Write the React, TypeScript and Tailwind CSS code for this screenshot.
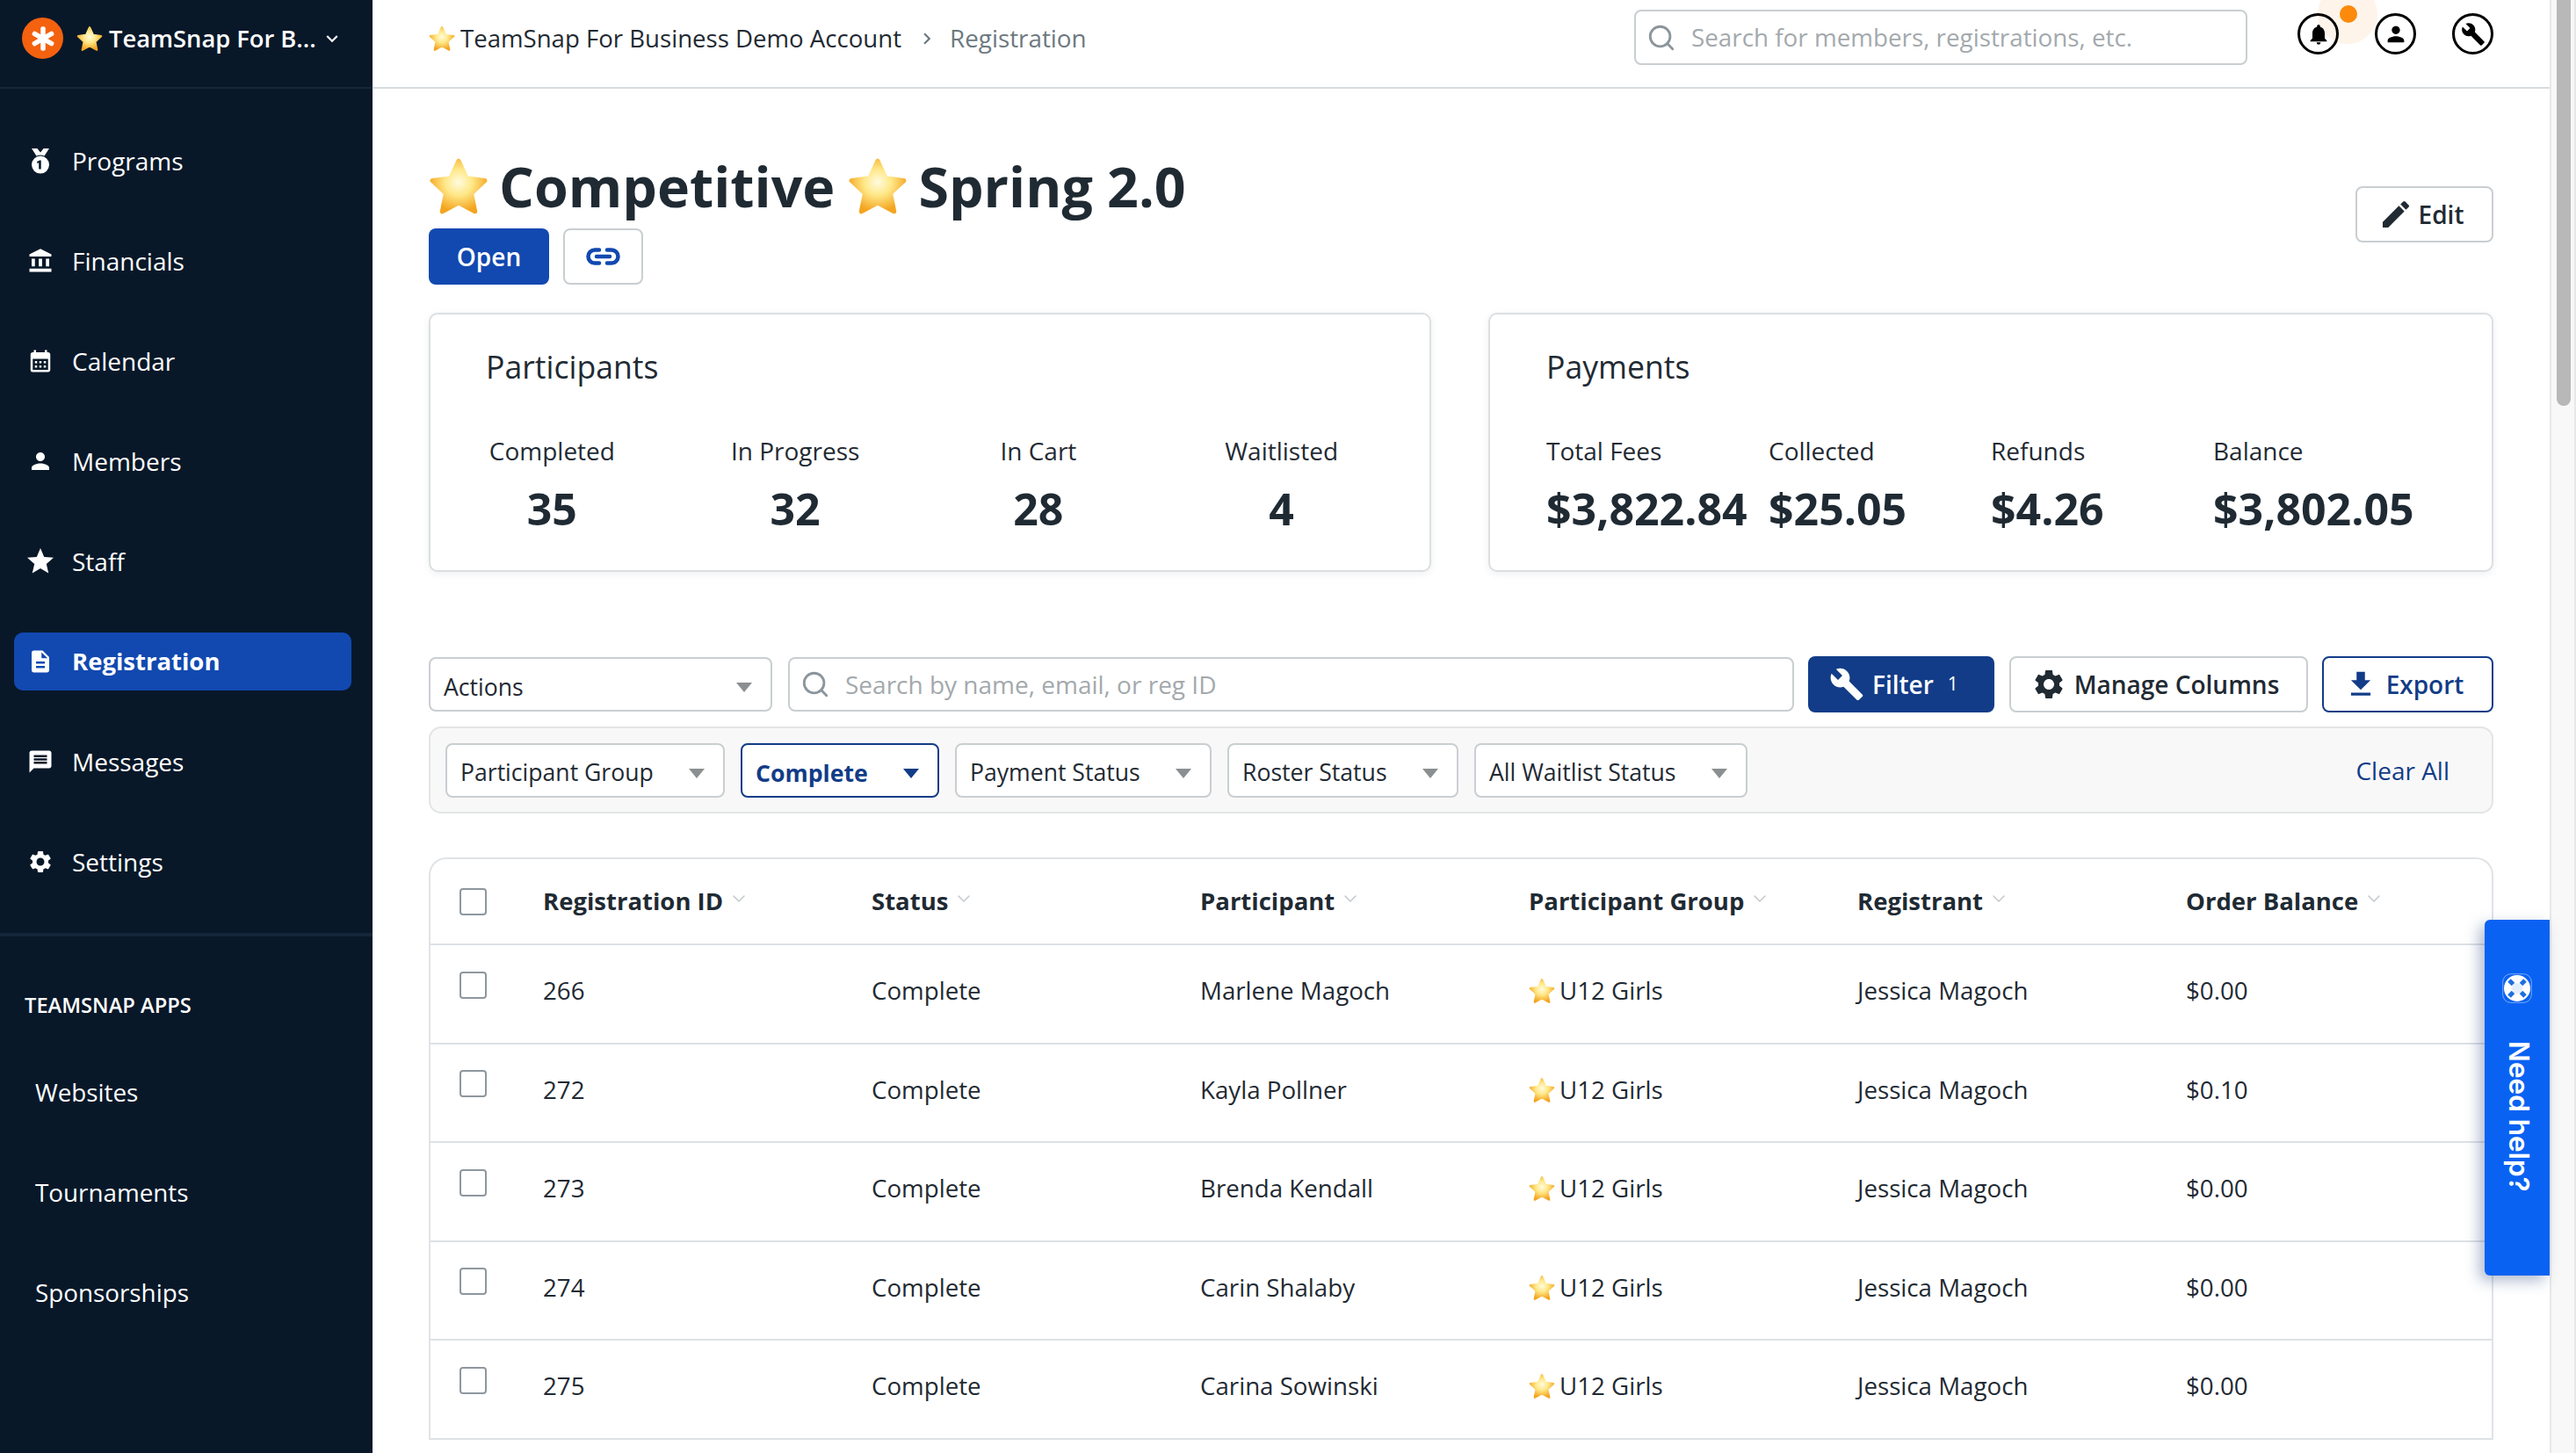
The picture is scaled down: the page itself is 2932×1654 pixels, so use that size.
import React from 'react';
import { MdAccountBalance, MdCalendarMonth, MdPerson, MdStar, MdDescription, MdMessage, MdSettings, MdEdit, MdBuild, MdFileDownload, MdNotifications, MdKeyboardArrowDown, MdChevronRight } from 'react-icons/md';
import { ChevronDown, Search } from 'lucide-react';

function Star({ id, className }: { id: string; className: string }) {
  return (
    <svg viewBox="0 0 64 64" className={className}>
      <defs>
        <radialGradient id={id} cx="50%" cy="42%" r="58%">
          <stop offset="0%" stopColor="#fffbe0" />
          <stop offset="45%" stopColor="#ffe888" />
          <stop offset="100%" stopColor="#f4a520" />
        </radialGradient>
      </defs>
      <path d="M32 5 L40.5 23.5 L60 26 L45.5 39.5 L49.5 59 L32 49.5 L14.5 59 L18.5 39.5 L4 26 L23.5 23.5 Z" fill={`url(#${id})`} stroke={`url(#${id})`} strokeWidth="5" strokeLinejoin="round" />
    </svg>
  );
}

function Medal({ className }: { className: string }) {
  return (
    <svg viewBox="0 0 24 32" className={className} fill="currentColor">
      <path d="M1 0h7l4 5 4-5h7l-6 9.5a11 11 0 0 0-10 0z" />
      <path fillRule="evenodd" d="M12 9.5a11 11 0 1 1 0 22 11 11 0 0 1 0-22zM11 15l-3.2 1.6v2.2l2.2-.9V26h2.8V15z" />
    </svg>
  );
}

function Arrow({ color }: { color: string }) {
  return (
    <svg viewBox="0 0 18 11" className={`w-[18px] h-[11px] shrink-0 mt-[7px] ${color}`} fill="currentColor">
      <path d="M0 0h18L9 11z" />
    </svg>
  );
}

const nav = [
  { label: 'Programs', icon: <Medal className="w-[24px] h-[29px]" /> },
  { label: 'Financials', icon: <MdAccountBalance className="w-[30px] h-[30px]" /> },
  { label: 'Calendar', icon: <MdCalendarMonth className="w-[30px] h-[30px]" /> },
  { label: 'Members', icon: <MdPerson className="w-[30px] h-[30px]" /> },
  { label: 'Staff', icon: <MdStar className="w-[36px] h-[36px]" /> },
  { label: 'Registration', icon: <MdDescription className="w-[30px] h-[30px]" />, active: true },
  { label: 'Messages', icon: <MdMessage className="w-[30px] h-[30px]" /> },
  { label: 'Settings', icon: <MdSettings className="w-[30px] h-[30px]" /> },
];

const rows = [
  ['266', 'Marlene Magoch', '$0.00'],
  ['272', 'Kayla Pollner', '$0.10'],
  ['273', 'Brenda Kendall', '$0.00'],
  ['274', 'Carin Shalaby', '$0.00'],
  ['275', 'Carina Sowinski', '$0.00'],
];

const headers = ['Registration ID', 'Status', 'Participant', 'Participant Group', 'Registrant', 'Order Balance'];

function Sidebar() {
  return (
    <aside className="w-[424px] shrink-0 h-full bg-[#081829] text-white flex flex-col">
      <div className="h-[101px] shrink-0 border-b-[2px] border-[#15263a] flex items-start pt-[20px] pl-[25px]">
        <div className="w-[47px] h-[47px] rounded-full bg-[#f4610f] flex items-center justify-center shrink-0">
          <svg viewBox="0 0 24 24" className="w-[30px] h-[30px]" fill="#fff">
            <rect x="9.8" y="1" width="4.4" height="22" rx="1.6" />
            <rect x="9.8" y="1" width="4.4" height="22" rx="1.6" transform="rotate(60 12 12)" />
            <rect x="9.8" y="1" width="4.4" height="22" rx="1.6" transform="rotate(120 12 12)" />
          </svg>
        </div>
        <div className="flex items-center h-[47px] ml-[15px]">
          <Star id="s-side" className="w-[30px] h-[30px]" />
          <span className="ml-[7px] text-[27.3px] font-semibold leading-none whitespace-nowrap">TeamSnap For B...</span>
          <MdKeyboardArrowDown className="w-[26px] h-[26px] ml-[5px]" />
        </div>
      </div>
      <nav className="flex flex-col px-[16px] pt-[49px] gap-[48px] shrink-0">
        {nav.map((n) => (
          <div key={n.label} className={`h-[66px] flex items-center rounded-[10px] w-[384px] ${n.active ? 'bg-[#1249b0] font-bold' : ''}`}>
            <span className="w-[60px] flex justify-center shrink-0">{n.icon}</span>
            <span className={`ml-[6px] leading-none ${n.active ? 'text-[27.5px]' : 'text-[28px]'}`}>{n.label}</span>
          </div>
        ))}
      </nav>
      <div className="mt-[48px] h-[4px] bg-[#15263a] shrink-0" />
      <div className="pl-[28px] mt-[67px] text-[23.7px] font-semibold leading-none">TEAMSNAP APPS</div>
      <div className="flex flex-col pl-[40px] mt-[71px] gap-[84px] text-[27.8px] leading-[30px]">
        <div>Websites</div>
        <div>Tournaments</div>
        <div>Sponsorships</div>
      </div>
    </aside>
  );
}

function TopBar() {
  return (
    <header className="h-[101px] shrink-0 border-b-[2px] border-[#d6dbde] flex items-start px-[64px] relative">
      <div className="flex items-center h-[88px]">
        <Star id="s-crumb" className="w-[30px] h-[30px]" />
        <span className="ml-[6px] text-[27.6px] text-[#1f2a33] whitespace-nowrap">TeamSnap For Business Demo Account</span>
        <MdChevronRight className="w-[26px] h-[26px] ml-[16px] text-[#6d7880]" />
        <span className="ml-[13px] text-[27.8px] text-[#6d7880]">Registration</span>
      </div>
      <div className="ml-auto flex items-start pt-[11px]">
        <div className="w-[698px] h-[63px] rounded-[8px] border-[2px] border-[#c9ced1] flex items-center pl-[12px] mr-[57px]">
          <Search className="w-[34px] h-[34px] text-[#8b959c]" strokeWidth={2} />
          <span className="ml-[17px] text-[27.8px] text-[#a3a9ad]">Search for members, registrations, etc.</span>
        </div>
        <div className="flex gap-[41px] pt-[4px] relative">
          <div className="absolute left-[23px] top-[-29px] w-[68px] h-[68px] rounded-full bg-[#fef4ea]" />
          <div className="absolute left-[48px] top-[-5px] w-[20px] h-[20px] rounded-full bg-[#fb8a0d]" />
          <div className="relative w-[47px] h-[47px] rounded-full border-[3px] border-black flex items-center justify-center text-black"><MdNotifications className="w-[28px] h-[28px]" /></div>
          <div className="relative w-[47px] h-[47px] rounded-full border-[3px] border-black flex items-center justify-center text-black"><MdPerson className="w-[28px] h-[28px]" /></div>
          <div className="relative w-[47px] h-[47px] rounded-full border-[3px] border-black flex items-center justify-center text-black"><MdBuild className="w-[28px] h-[28px]" /></div>
        </div>
      </div>
    </header>
  );
}

function Select({ label, className, active }: { label: string; className: string; active?: boolean }) {
  return (
    <div className={`h-[62px] rounded-[8px] border-[2px] flex items-center justify-between pl-[15px] pr-[21px] bg-white shrink-0 whitespace-nowrap ${active ? 'border-[#123c88] text-[#123c88] font-bold text-[26.7px]' : 'border-[#c9ced1] text-[#1f2a33] text-[26.6px]'} ${className}`}>
      <span className="pt-[7px]">{label}</span>
      <Arrow color={active ? 'text-[#123c88]' : 'text-[#8c8f91]'} />
    </div>
  );
}

function Card({ className, children }: { className: string; children: React.ReactNode }) {
  return (
    <section className={`h-[295px] rounded-[10px] border-[2px] border-[#dcdfe2] bg-white shadow-[0_2px_8px_rgba(30,50,70,0.08)] ${className}`}>
      {children}
    </section>
  );
}

function Stat({ label, value }: { label: string; value: string }) {
  return (
    <div className="flex flex-col items-center">
      <div className="text-[28px] text-[#1f2a33] leading-[40px]">{label}</div>
      <div className="text-[50px] font-bold text-[#1f2a33] leading-[70px] mt-[11px]">{value}</div>
    </div>
  );
}

function Money({ label, value }: { label: string; value: string }) {
  return (
    <div className="flex flex-col w-[253px]">
      <div className="text-[28px] text-[#1f2a33] leading-[40px]">{label}</div>
      <div className="text-[50px] font-bold text-[#1f2a33] leading-[70px] mt-[11px] whitespace-nowrap">{value}</div>
    </div>
  );
}

export default function App() {
  return (
    <div className="w-[2932px] h-[1654px] overflow-hidden flex font-['Open_Sans',sans-serif] bg-white relative">
      <Sidebar />
      <main className="flex-1 min-w-0 h-full flex flex-col">
        <TopBar />
        <div className="px-[64px] flex flex-col">
          <div className="flex justify-between items-start pt-[72px]">
            <div className="flex flex-col">
              <h1 className="flex items-center h-[78px] text-[62.7px] font-bold text-[#1f2a33] leading-none whitespace-nowrap">
                <Star id="s-h1" className="w-[68px] h-[68px] shrink-0" />
                <span className="ml-[12px]">Competitive</span>
                <Star id="s-h2" className="w-[68px] h-[68px] ml-[15px] shrink-0" />
                <span className="ml-[12px]">Spring 2.0</span>
              </h1>
              <div className="flex gap-[16px] mt-[9px]">
                <div className="w-[137px] h-[64px] rounded-[8px] bg-[#1249b0] text-white text-[28px] font-semibold flex items-center justify-center">Open</div>
                <div className="w-[91px] h-[64px] rounded-[8px] border-[2px] border-[#c9ced1] flex items-center justify-center">
                  <svg viewBox="0 0 39 20" className="w-[39px] h-[20px]" fill="none" stroke="#1249b0" strokeWidth="4.5" strokeLinecap="round">
                    <path d="M15 2.5H10a7.5 7.5 0 0 0 0 15h5" />
                    <path d="M24 2.5h5a7.5 7.5 0 0 1 0 15h-5" />
                    <path d="M12 10h15" />
                  </svg>
                </div>
              </div>
            </div>
            <div className="w-[157px] h-[64px] mt-[39px] rounded-[8px] border-[2px] border-[#c9ced1] flex items-center justify-center pr-[8px] text-[28px] font-semibold text-[#1f2a33]">
              <MdEdit className="w-[40px] h-[40px] mr-[6px]" />
              Edit
            </div>
          </div>

          <div className="flex justify-between mt-[32px]">
            <Card className="w-[1141px]">
              <h2 className="text-[35.6px] text-[#1f2a33] leading-[50px] pl-[63px] pt-[34px]">Participants</h2>
              <div className="grid grid-cols-4 w-[1107px] mt-[51px]">
                <Stat label="Completed" value="35" />
                <Stat label="In Progress" value="32" />
                <Stat label="In Cart" value="28" />
                <Stat label="Waitlisted" value="4" />
              </div>
            </Card>
            <Card className="w-[1144px]">
              <h2 className="text-[35.6px] text-[#1f2a33] leading-[50px] pl-[64px] pt-[34px]">Payments</h2>
              <div className="flex pl-[64px] mt-[51px]">
                <Money label="Total Fees" value="$3,822.84" />
                <Money label="Collected" value="$25.05" />
                <Money label="Refunds" value="$4.26" />
                <Money label="Balance" value="$3,802.05" />
              </div>
            </Card>
          </div>

          <div className="flex items-center mt-[96px] h-[64px]">
            <Select label="Actions" className="w-[391px]" />
            <div className="ml-[18px] w-[1145px] h-[62px] rounded-[8px] border-[2px] border-[#c9ced1] flex items-center pl-[12px]">
              <Search className="w-[34px] h-[34px] text-[#8b959c]" strokeWidth={2} />
              <span className="ml-[17px] text-[28px] text-[#a3a9ad]">Search by name, email, or reg ID</span>
            </div>
            <div className="ml-[16px] w-[212px] h-[64px] rounded-[8px] bg-[#123c88] text-white flex items-center pl-[24px] text-[28px] font-semibold">
              <MdBuild className="w-[40px] h-[40px]" />
              <span className="ml-[9px]">Filter</span>
              <span className="ml-[16px] text-[21px] font-normal">1</span>
            </div>
            <div className="ml-[17px] w-[340px] h-[64px] rounded-[8px] border-[2px] border-[#c9ced1] flex items-center justify-center pr-[8px] text-[28px] font-semibold text-[#1f2a33]">
              <MdSettings className="w-[40px] h-[40px]" />
              <span className="ml-[9px]">Manage Columns</span>
            </div>
            <div className="ml-[16px] w-[195px] h-[64px] rounded-[8px] border-[2px] border-[#123c88] flex items-center justify-center pr-[9px] text-[28px] font-semibold text-[#123c88]">
              <MdFileDownload className="w-[38px] h-[38px]" />
              <span className="ml-[10px]">Export</span>
            </div>
          </div>

          <div className="mt-[16px] h-[99px] rounded-[14px] border-[2px] border-[#e3e5e7] bg-[#f8f8f8] flex items-center pl-[17px] pr-[48px] gap-[18px]">
            <Select label="Participant Group" className="w-[318px]" />
            <Select label="Complete" className="w-[226px]" active />
            <Select label="Payment Status" className="w-[292px]" />
            <Select label="Roster Status" className="w-[263px]" />
            <Select label="All Waitlist Status" className="w-[311px]" />
            <span className="ml-auto text-[28px] text-[#123c88]">Clear All</span>
          </div>

          <div className="mt-[50px] rounded-t-[20px] border-x-[2px] border-t-[2px] border-[#e0e3e6] bg-white">
            <div className="h-[98px] grid grid-cols-[128px_374px_374px_374px_374px_374px_1fr] items-center border-b-[2px] border-[#dde1e4]">
              <div className="pl-[33px]">
                <div className="w-[31px] h-[31px] rounded-[4px] border-[2px] border-[#8e979e] bg-white" />
              </div>
              {headers.map((h) => (
                <div key={h} className="flex items-center text-[27.5px] font-bold text-[#1f2a33] whitespace-nowrap">
                  {h}
                  <ChevronDown className="w-[24px] h-[24px] ml-[6px] text-[#c3c8cc] -mt-[6px]" strokeWidth={1.5} />
                </div>
              ))}
            </div>
            {rows.map((r) => (
              <div key={r[0]} className="h-[112.5px] grid grid-cols-[128px_374px_374px_374px_374px_374px_1fr] items-center border-b-[2px] border-[#dde1e4] text-[27.7px] text-[#1f2a33]">
                <div className="pl-[33px] -mt-[20px]">
                  <div className="w-[31px] h-[31px] rounded-[4px] border-[2px] border-[#8e979e] bg-white" />
                </div>
                <div className="-mt-[6px]">{r[0]}</div>
                <div className="-mt-[6px]">Complete</div>
                <div className="-mt-[6px]">{r[1]}</div>
                <div className="flex items-center -mt-[6px]">
                  <Star id={`s-r-${r[0]}`} className="w-[30px] h-[30px] mr-[5px]" />
                  U12 Girls
                </div>
                <div className="-mt-[6px]">Jessica Magoch</div>
                <div className="-mt-[6px]">{r[2]}</div>
              </div>
            ))}
          </div>
        </div>
      </main>
      <div className="w-[30px] h-full shrink-0 bg-[#f8f8f8] border-x-[2px] border-[#e8e8e8] pl-[6px] pr-[4px]">
        <div className="w-[16px] h-[462px] rounded-b-full bg-[#b8b8b8]" />
      </div>
      <div className="absolute left-[2828px] top-[1047px] w-[74px] h-[405px] rounded-l-[6px] bg-[#0a62f2] shadow-[-6px_6px_16px_rgba(30,60,120,0.35)] flex flex-col items-center text-white pt-[61px]">
        <svg viewBox="0 0 34 34" className="w-[34px] h-[34px]">
          <rect x="0.7" y="0.7" width="32.6" height="32.6" rx="9" fill="none" stroke="#ffffff" strokeOpacity="0.45" strokeWidth="1" />
          <circle cx="17" cy="17" r="15" fill="#fff" />
          <circle cx="17" cy="17" r="6" fill="#e4eefc" />
          <path d="M8 8l4.5 4.5M26 8l-4.5 4.5M8 26l4.5-4.5M26 26l-4.5-4.5" stroke="#1f6ee0" strokeWidth="5" />
        </svg>
        <span className="mt-[43px] ml-[4px] text-[31.5px] font-semibold leading-none font-['Inter',sans-serif] [writing-mode:vertical-rl]">Need help?</span>
      </div>
    </div>
  );
}
